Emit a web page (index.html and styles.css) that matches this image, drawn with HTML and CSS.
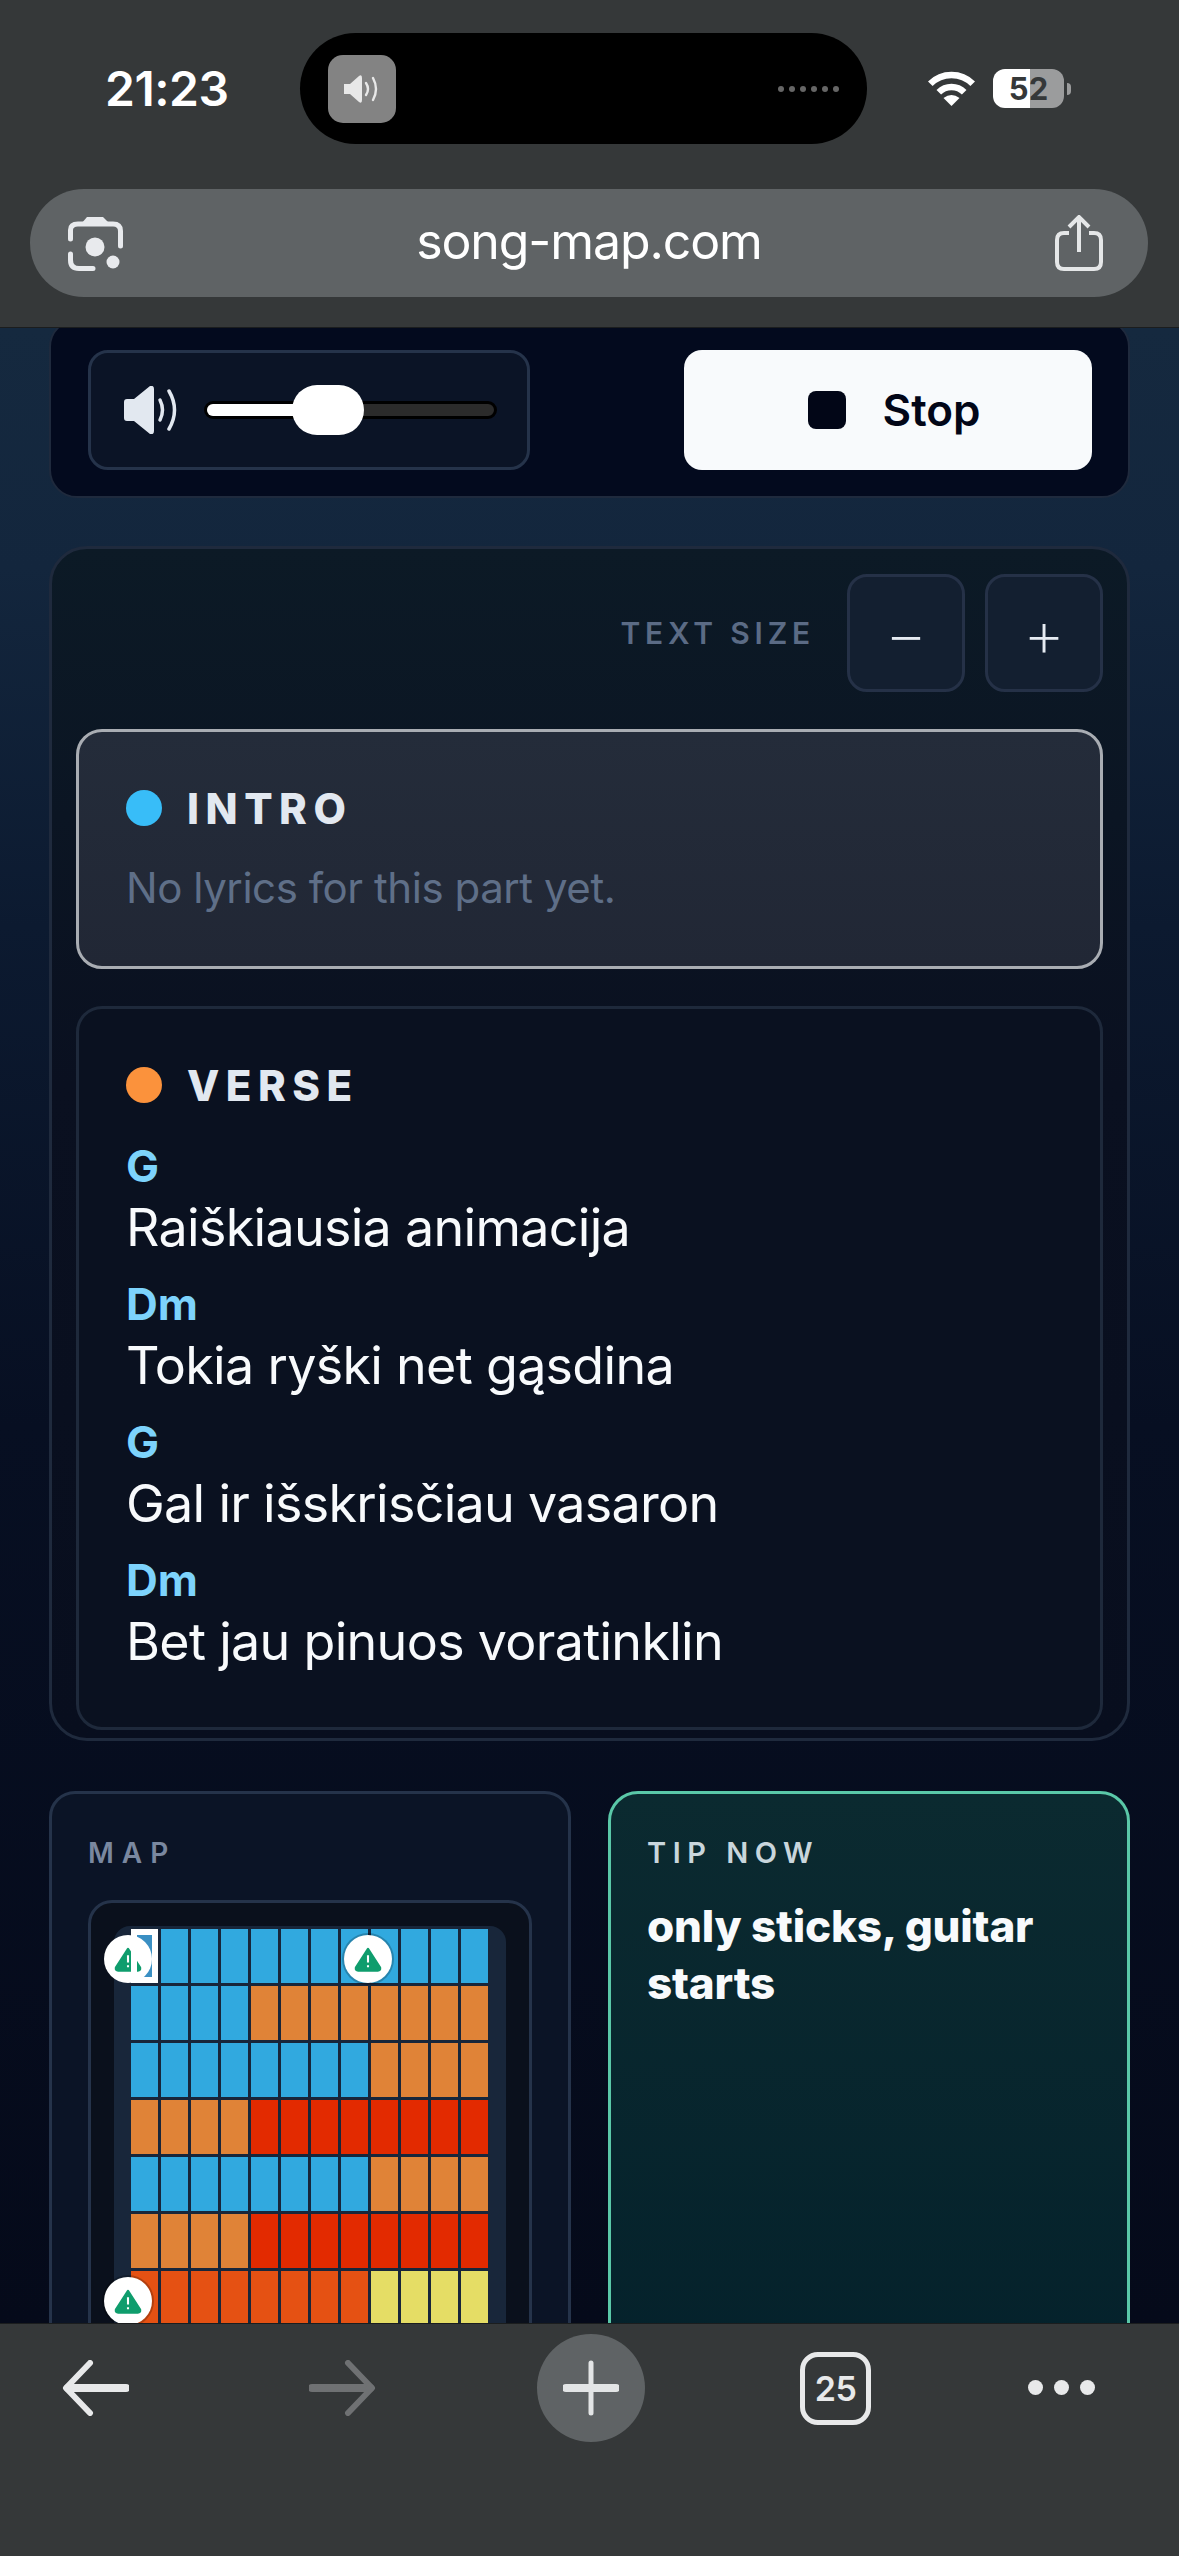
FILE: index.html
```html
<!DOCTYPE html>
<html lang="en">
<head>
    <meta charset="UTF-8">
    <meta name="viewport" content="width=device-width, initial-scale=1.0">
    <title>song-map.com</title>
    <link rel="stylesheet" href="styles.css">
</head>
<body>
    <div class="phone">
        <!-- Browser chrome, top -->
        <header class="top-chrome">
            <div class="status-row">
                <span class="clock">21:23</span>
                <div class="island">
                    <div class="island-tile">
                        <svg width="36" height="30" viewBox="0 0 36 30">
                            <path d="M0 10 H6 L15 2 Q18 0 18 4 V26 Q18 30 15 28 L6 20 H0 Z" fill="#e8e8e8"/>
                            <path d="M22 9 Q26 15 22 21" fill="none" stroke="#e8e8e8" stroke-width="2.4" stroke-linecap="round"/>
                            <path d="M29 4 Q35 15 29 26" fill="none" stroke="#e8e8e8" stroke-width="2.4" stroke-linecap="round"/>
                        </svg>
                    </div>
                    <div class="island-dots">
                        <i></i><i></i><i></i><i></i><i></i><i></i>
                    </div>
                </div>
                <svg class="wifi" width="47" height="36" viewBox="0 0 47 36">
                    <path d="M2.3 12.8 A30 30 0 0 1 44.7 12.8" fill="none" stroke="#fff" stroke-width="6.5"/>
                    <path d="M10.8 21.3 A18 18 0 0 1 36.2 21.3" fill="none" stroke="#fff" stroke-width="6.5"/>
                    <path d="M23.5 35 L15.5 27 Q23.5 21 31.5 27 Z" fill="#fff"/>
                </svg>
                <div class="battery">52</div>
                <span class="battery-nub"></span>
            </div>
            <div class="url-bar">
                <svg width="55" height="55" viewBox="0 0 55 55">
                    <path d="M13 8 L19 1 H35 L42 8 Z" fill="#e8eaed"/>
                    <path d="M2.500 23 V14 Q2.500 8 10 8 H45 Q52.500 8 52.500 15 V30" fill="none" stroke="#e8eaed" stroke-width="5" stroke-linecap="round"/>
                    <path d="M2.500 38 V44 Q2.500 52.500 11 52.500 H25" fill="none" stroke="#e8eaed" stroke-width="5" stroke-linecap="round"/>
                    <circle cx="27" cy="31" r="9.500" fill="#e8eaed"/>
                    <circle cx="45" cy="46" r="6.500" fill="#e8eaed"/>
                </svg>
                <span class="url-text">song-map.com</span>
                <svg width="48" height="56" viewBox="0 0 48 56">
                    <path d="M14 18 H9 Q2 18 2 25 V47 Q2 54 9 54 H39 Q46 54 46 47 V25 Q46 18 39 18 H34" fill="none" stroke="#e5e7e8" stroke-width="4"/>
                    <path d="M24 37 V3 M14 12 L24 2 L34 12" fill="none" stroke="#e5e7e8" stroke-width="4"/>
                </svg>
            </div>
        </header>

        <main class="page">
            <section class="player-card">
                <div class="volume-box">
                    <svg width="54" height="48" viewBox="0 0 54 48">
                        <path d="M0 16 Q0 13 3 13 H10 L26 0 Q30 -1 30 3 V45 Q30 49 26 48 L10 35 H3 Q0 35 0 32 Z" fill="#e2e8f0"/>
                        <path d="M36 14 Q41 24 36 34" fill="none" stroke="#e2e8f0" stroke-width="3.500" stroke-linecap="round"/>
                        <path d="M45 5 Q56 24 45 43" fill="none" stroke="#e2e8f0" stroke-width="3.500" stroke-linecap="round"/>
                    </svg>
                    <div class="slider">
                        <div class="slider-fill"></div>
                        <div class="slider-thumb"></div>
                    </div>
                </div>
                <button class="stop-btn"><span class="stop-icon"></span>Stop</button>
            </section>

            <section class="lyrics-card">
                <div class="size-row">
                    <span class="size-label">TEXT SIZE</span>
                    <button class="size-btn">&minus;</button>
                    <button class="size-btn">+</button>
                </div>

                <div class="part part-active">
                    <div class="part-head">
                        <span class="part-dot dot-blue"></span>
                        <span class="part-name">INTRO</span>
                    </div>
                    <p class="no-lyrics">No lyrics for this part yet.</p>
                </div>

                <div class="part">
                    <div class="part-head">
                        <span class="part-dot dot-orange"></span>
                        <span class="part-name">VERSE</span>
                    </div>
                    <div class="lines">
                        <div class="line"><b>G</b><span>Raiškiausia animacija</span></div>
                        <div class="line"><b>Dm</b><span>Tokia ryški net gąsdina</span></div>
                        <div class="line"><b>G</b><span>Gal ir išskrisčiau vasaron</span></div>
                        <div class="line"><b>Dm</b><span>Bet jau pinuos voratinklin</span></div>
                    </div>
                </div>
            </section>

            <section class="bottom-row">
                <div class="map-card">
                    <h3 class="card-label">MAP</h3>
                    <div class="map-box">
                        <div class="map-grid">
                            <div class="cell blue current"></div><div class="cell blue"></div><div class="cell blue"></div><div class="cell blue"></div><div class="cell blue"></div><div class="cell blue"></div><div class="cell blue"></div><div class="cell blue"></div><div class="cell blue"></div><div class="cell blue"></div><div class="cell blue"></div><div class="cell blue"></div>
                            <div class="cell blue"></div><div class="cell blue"></div><div class="cell blue"></div><div class="cell blue"></div><div class="cell orange"></div><div class="cell orange"></div><div class="cell orange"></div><div class="cell orange"></div><div class="cell orange"></div><div class="cell orange"></div><div class="cell orange"></div><div class="cell orange"></div>
                            <div class="cell blue"></div><div class="cell blue"></div><div class="cell blue"></div><div class="cell blue"></div><div class="cell blue"></div><div class="cell blue"></div><div class="cell blue"></div><div class="cell blue"></div><div class="cell orange"></div><div class="cell orange"></div><div class="cell orange"></div><div class="cell orange"></div>
                            <div class="cell orange"></div><div class="cell orange"></div><div class="cell orange"></div><div class="cell orange"></div><div class="cell red"></div><div class="cell red"></div><div class="cell red"></div><div class="cell red"></div><div class="cell red"></div><div class="cell red"></div><div class="cell red"></div><div class="cell red"></div>
                            <div class="cell blue"></div><div class="cell blue"></div><div class="cell blue"></div><div class="cell blue"></div><div class="cell blue"></div><div class="cell blue"></div><div class="cell blue"></div><div class="cell blue"></div><div class="cell orange"></div><div class="cell orange"></div><div class="cell orange"></div><div class="cell orange"></div>
                            <div class="cell orange"></div><div class="cell orange"></div><div class="cell orange"></div><div class="cell orange"></div><div class="cell red"></div><div class="cell red"></div><div class="cell red"></div><div class="cell red"></div><div class="cell red"></div><div class="cell red"></div><div class="cell red"></div><div class="cell red"></div>
                            <div class="cell ember"></div><div class="cell ember"></div><div class="cell ember"></div><div class="cell ember"></div><div class="cell ember"></div><div class="cell ember"></div><div class="cell ember"></div><div class="cell ember"></div><div class="cell yellow"></div><div class="cell yellow"></div><div class="cell yellow"></div><div class="cell yellow"></div>

                            <span class="badge badge-a">
                                <svg width="28" height="25" viewBox="0 0 27 24"><path d="M13.500 2 L25 20 Q25.500 22.500 23 22.500 H4 Q1.500 22.500 2 20 Z" fill="#0f9d6d" stroke="#0f9d6d" stroke-width="2.500" stroke-linejoin="round"/><path d="M13.500 8 V15 M13.500 17.500 V19.500" stroke="#fff" stroke-width="2"/></svg>
                            </span>
                            <span class="badge badge-b">
                                <svg width="28" height="25" viewBox="0 0 27 24"><path d="M13.500 2 L25 20 Q25.500 22.500 23 22.500 H4 Q1.500 22.500 2 20 Z" fill="#0f9d6d" stroke="#0f9d6d" stroke-width="2.500" stroke-linejoin="round"/><path d="M13.500 8 V15 M13.500 17.500 V19.500" stroke="#fff" stroke-width="2"/></svg>
                            </span>
                            <span class="badge badge-c">
                                <svg width="28" height="25" viewBox="0 0 27 24"><path d="M13.500 2 L25 20 Q25.500 22.500 23 22.500 H4 Q1.500 22.500 2 20 Z" fill="#0f9d6d" stroke="#0f9d6d" stroke-width="2.500" stroke-linejoin="round"/><path d="M13.500 8 V15 M13.500 17.500 V19.500" stroke="#fff" stroke-width="2"/></svg>
                            </span>
                        </div>
                    </div>
                </div>
                <div class="tip-card">
                    <h3 class="card-label tip-label">TIP NOW</h3>
                    <p class="tip-text">only sticks, guitar starts</p>
                </div>
            </section>
        </main>

        <!-- Browser chrome, bottom -->
        <footer class="bottom-chrome">
            <svg class="nav-back" width="67" height="56" viewBox="0 0 67 56">
                <path d="M64 28 H6" fill="none" stroke="#e8e9ea" stroke-width="8" stroke-linecap="round"/>
                <path d="M28 3 L4 28 L28 53" fill="none" stroke="#e8e9ea" stroke-width="6" stroke-linecap="round" stroke-linejoin="round"/>
            </svg>
            <svg class="nav-forward" width="67" height="56" viewBox="0 0 67 56">
                <path d="M3 28 H61" fill="none" stroke="#6f7173" stroke-width="8" stroke-linecap="round"/>
                <path d="M39 3 L63 28 L39 53" fill="none" stroke="#6f7173" stroke-width="6" stroke-linecap="round" stroke-linejoin="round"/>
            </svg>
            <div class="new-tab">
                <svg width="56" height="56" viewBox="0 0 56 56">
                    <path d="M28 3 V53" stroke="#e3e5e6" stroke-width="5" stroke-linecap="round"/>
                    <path d="M3 28 H53" stroke="#e3e5e6" stroke-width="8" stroke-linecap="round"/>
                </svg>
            </div>
            <div class="tab-count">25</div>
            <div class="more-dots"><i></i><i></i><i></i></div>
        </footer>
    </div>
</body>
</html>
```

FILE: styles.css
```css
* {
    box-sizing: border-box;
}

body {
    margin: 0;
    background-color: #353839;
    font-family: Inter, "Noto Sans", sans-serif;
}

.phone {
    display: flex;
    flex-direction: column;
    width: 1179px;
    height: 2556px;
    overflow: hidden;
}

/* Top chrome */
.top-chrome {
    flex: 0 0 328px;
    position: relative;
    z-index: 2;
    background-color: #353839;
    border-bottom: 1px solid #1b1d1e;
}

.status-row {
    display: flex;
    align-items: center;
    height: 111px;
    margin-top: 33px;
    padding-left: 105px;
}

.clock {
    width: 195px;
    color: #fff;
    font-size: 48px;
    font-weight: 600;
    letter-spacing: -0.5px;
}

.island {
    display: flex;
    align-items: center;
    justify-content: space-between;
    width: 567px;
    height: 111px;
    padding: 0 28px;
    background-color: #000;
    border-radius: 56px;
}

.island-tile {
    display: flex;
    align-items: center;
    justify-content: center;
    width: 68px;
    height: 68px;
    background-color: #838383;
    border-radius: 15px;
}

.island-dots {
    display: flex;
    gap: 5px;
}

.island-dots i {
    display: block;
    width: 6px;
    height: 6px;
    background-color: #666;
    border-radius: 50%;
}

.wifi {
    margin-left: 61px;
}

.battery {
    width: 71px;
    height: 39px;
    margin-left: 18px;
    color: #353839;
    font-size: 31px;
    font-weight: 700;
    line-height: 39px;
    text-align: center;
    background: linear-gradient(90deg, #fff 52%, #9b9c9d 52%);
    border-radius: 12px;
}

.battery-nub {
    width: 4px;
    height: 12px;
    margin-left: 3px;
    background-color: #9b9c9d;
    border-radius: 0 6px 6px 0;
}

.url-bar {
    display: flex;
    align-items: center;
    justify-content: space-between;
    height: 108px;
    margin: 45px 31px 0 30px;
    padding: 0 45px 0 38px;
    background-color: #5f6365;
    border-radius: 54px;
}

.url-text {
    margin-bottom: 5px;
    color: #fff;
    font-size: 50px;
    font-weight: 400;
    letter-spacing: -1.100px;
}

/* Page */
.page {
    flex: 1;
    min-height: 0;
    padding: 0 49px;
    overflow: hidden;
    background: linear-gradient(180deg, #15293f 0%, #13263d 12%, #0c1a30 30%, #070f22 55%, #050a1a 100%);
}

.player-card {
    display: flex;
    align-items: stretch;
    justify-content: space-between;
    margin-top: -9px;
    padding: 29px 36px 26px 37px;
    background-color: #030a1e;
    border: 2px solid #1f2a3d;
    border-radius: 28px;
}

.volume-box {
    display: flex;
    align-items: center;
    gap: 26px;
    width: 442px;
    height: 120px;
    padding: 0 28px 0 33px;
    background-color: #0b1426;
    border: 3px solid #25334a;
    border-radius: 20px;
}

.slider {
    position: relative;
    width: 293px;
    height: 18px;
    background-color: #2b2b2b;
    border: 3px solid #000;
    border-radius: 9px;
}

.slider-fill {
    width: 110px;
    height: 100%;
    background-color: #fff;
    border-radius: 6px 0 0 6px;
}

.slider-thumb {
    position: absolute;
    top: -19px;
    left: 85px;
    width: 72px;
    height: 50px;
    background-color: #fff;
    border-radius: 25px;
}

.stop-btn {
    display: flex;
    align-items: center;
    justify-content: center;
    gap: 37px;
    width: 408px;
    height: 120px;
    padding: 0 0 0 12px;
    color: #020617;
    font-family: inherit;
    font-size: 44px;
    font-weight: 600;
    background-color: #f8fafc;
    border: none;
    border-radius: 18px;
}

.stop-icon {
    width: 38px;
    height: 38px;
    background-color: #020617;
    border-radius: 8px;
}

.lyrics-card {
    margin-top: 48px;
    padding: 25px 24px 8px;
    background: linear-gradient(180deg, #0c1a26 0%, #0a1020 45%, #080e1e 100%);
    border: 3px solid #1f2a3d;
    border-radius: 38px;
}

.size-row {
    display: flex;
    align-items: center;
    justify-content: flex-end;
    gap: 20px;
}

.size-label {
    margin-right: 12px;
    color: #5b6b85;
    font-size: 30px;
    font-weight: 600;
    letter-spacing: 4.800px;
}

.size-btn {
    width: 118px;
    height: 118px;
    padding: 0;
    color: #e6ebf2;
    font-family: inherit;
    font-size: 66px;
    font-weight: 200;
    line-height: 1;
    background-color: #131f30;
    border: 3px solid #253147;
    border-radius: 20px;
}

.part {
    margin-top: 37px;
    padding: 55px 47px 48px;
    background-color: #0a1120;
    border: 3px solid #1e293b;
    border-radius: 26px;
}

.part-active {
    padding-bottom: 51px;
    background: linear-gradient(180deg, #242c3a 0%, #212735 100%);
    border-color: #a9adb3;
}

.part-head {
    display: flex;
    align-items: center;
    gap: 25px;
    height: 42px;
}

.part-dot {
    width: 36px;
    height: 36px;
    border-radius: 50%;
}

.dot-blue {
    background-color: #38bdf8;
}

.dot-orange {
    background-color: #fb923c;
}

.part-name {
    color: #e2e8f0;
    font-size: 42px;
    font-weight: 800;
    letter-spacing: 6.500px;
}

.no-lyrics {
    margin: 32px 0 0;
    color: #5f6f88;
    font-size: 42px;
    letter-spacing: -0.450px;
    line-height: 54px;
}

.lines {
    display: flex;
    flex-direction: column;
    gap: 14px;
    margin-top: 35px;
}

.line b {
    display: block;
    color: #7dd3fc;
    font-size: 44px;
    font-weight: 700;
    line-height: 50px;
}

.line span {
    display: block;
    color: #f8fafc;
    font-size: 52px;
    letter-spacing: -0.700px;
    line-height: 74px;
}

.bottom-row {
    display: grid;
    grid-template-columns: 1fr 1fr;
    gap: 37px;
    margin-top: 50px;
}

.map-card {
    padding: 44px 36px 60px;
    background-color: #0b1426;
    border: 3px solid #25334a;
    border-radius: 26px;
}

.tip-card {
    padding: 44px 36px 0;
    background: linear-gradient(180deg, #0b2a30 0%, #04212b 100%);
    border: 3px solid #5ac8a8;
    border-radius: 30px;
}

.card-label {
    margin: 0;
    color: #7a88a0;
    font-size: 28px;
    font-weight: 600;
    letter-spacing: 8px;
    line-height: 30px;
}

.tip-label {
    color: #c9d6dc;
    font-size: 29px;
    letter-spacing: 6.500px;
}

.tip-text {
    margin: 30px 0 0;
    color: #f8fafc;
    font-size: 44px;
    font-weight: 800;
    letter-spacing: -0.200px;
    line-height: 57px;
}

.map-box {
    margin-top: 32px;
    padding: 23px 23px 0;
    background-color: #0a101c;
    border: 3px solid #25334a;
    border-radius: 24px;
}

.map-grid {
    position: relative;
    display: grid;
    grid-template-columns: repeat(12, 27px);
    grid-auto-rows: 54px;
    gap: 3px;
    padding: 3px 17px 20px;
    background-color: #18263a;
    border-radius: 16px;
}

.cell {
    position: relative;
}

.blue {
    background-color: #31a9df;
}

.orange {
    background-color: #e08337;
}

.red {
    background-color: #e32a00;
}

.ember {
    background-color: #e55113;
}

.yellow {
    background-color: #e5dd65;
}

.current {
    background-color: #3a8fc3;
}

/* white frame of the playing cell sits above the badge */
.current::after {
    content: "";
    position: absolute;
    inset: 0;
    z-index: 2;
    border: 6px solid #fff;
    pointer-events: none;
}

.badge {
    position: absolute;
    display: flex;
    align-items: center;
    justify-content: center;
    width: 48px;
    height: 48px;
    background-color: #fff;
    border-radius: 50%;
    box-shadow: 0 0 0 2px rgba(0, 0, 0, 0.22);
}

.badge-a {
    top: 9px;
    left: -10px;
    box-shadow: none;
}

.badge-b {
    top: 9px;
    left: 230px;
}

.badge-c {
    top: 351px;
    left: -10px;
}

/* Bottom chrome */
.bottom-chrome {
    flex: 0 0 233px;
    position: relative;
    z-index: 2;
    display: flex;
    align-items: flex-start;
    padding: 10px 0 0 62px;
    background-color: #353839;
    border-top: 1px solid #1b1d1e;
}

.nav-back,
.nav-forward {
    margin-top: 26px;
}

.nav-forward {
    margin-left: 180px;
}

.new-tab {
    display: flex;
    align-items: center;
    justify-content: center;
    width: 108px;
    height: 108px;
    margin-left: 161px;
    background-color: #5f6365;
    border-radius: 50%;
}

.tab-count {
    width: 71px;
    height: 73px;
    margin-top: 18px;
    margin-left: 155px;
    color: #e8e9ea;
    font-size: 34px;
    font-weight: 600;
    letter-spacing: -0.500px;
    line-height: 63px;
    text-align: center;
    border: 5px solid #e8e9ea;
    border-radius: 18px;
}

.more-dots {
    display: flex;
    gap: 11px;
    margin-top: 46px;
    margin-left: 157px;
}

.more-dots i {
    display: block;
    width: 15px;
    height: 15px;
    background-color: #e8e9ea;
    border-radius: 50%;
}
```
